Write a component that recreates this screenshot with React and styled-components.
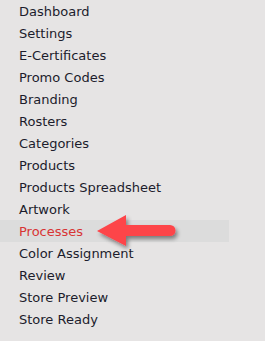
import React from 'react';
import styled, {createGlobalStyle} from 'styled-components';

const items = [
	'Dashboard', 'Settings', 'E-Certificates', 'Promo Codes', 'Branding',
	'Rosters', 'Categories', 'Products', 'Products Spreadsheet', 'Artwork',
	'Processes', 'Color Assignment', 'Review', 'Store Preview', 'Store Ready',
];

const App = () => (
	<>
		<Global/>
		<Sidebar>
			<Menu>
				{items.map((item) => (
					<Item key={item} active={item === 'Processes'}>
						<Label>{item}</Label>
						{item === 'Processes' && <Arrow/>}
					</Item>
				))}
			</Menu>
		</Sidebar>
	</>
);

const Arrow = () => (
	<ArrowSvg width="100" height="40" viewBox="0 0 100 40">
		<defs>
			<filter id="sh" x="-20%" y="-40%" width="150%" height="200%">
				<feGaussianBlur in="SourceAlpha" stdDeviation="2"/>
				<feOffset dx="2" dy="3"/>
				<feComponentTransfer><feFuncA type="linear" slope="0.45"/></feComponentTransfer>
				<feMerge><feMergeNode/><feMergeNode in="SourceGraphic"/></feMerge>
			</filter>
		</defs>
		<path
			d="M2 16 L31 0 L31 10 L75 10 A5.5 5.5 0 0 1 75 21 L31 21 L31 31 Z"
			fill="#fd444a"
			filter="url(#sh)"
		/>
	</ArrowSvg>
);

export default App;

const Global = createGlobalStyle`
	body {
		margin: 0;
		background: #e6e4e4;
	}
`;

const Sidebar = styled.nav`
	width: 265px;
	height: 341px;
	background: #e6e4e4;
	overflow: hidden;
`;

const Menu = styled.ul`
	list-style: none;
	margin: 0;
	padding: 0;
	width: 229px;
`;

const Item = styled.li`
	position: relative;
	height: 22px;
	padding-left: 19px;
	font-family: "DejaVu Sans", Verdana, sans-serif;
	font-size: 13px;
	color: ${({active}) => (active ? '#d83434' : '#1c1c2c')};
	background: ${({active}) => (active ? '#dcdcdc' : 'transparent')};
`;

const Label = styled.span`
	display: block;
	line-height: 22px;
	padding-top: 1px;
	height: 22px;
	box-sizing: border-box;
	white-space: nowrap;
`;

const ArrowSvg = styled.svg`
	position: absolute;
	left: 95px;
	top: -5px;
	overflow: visible;
`;
